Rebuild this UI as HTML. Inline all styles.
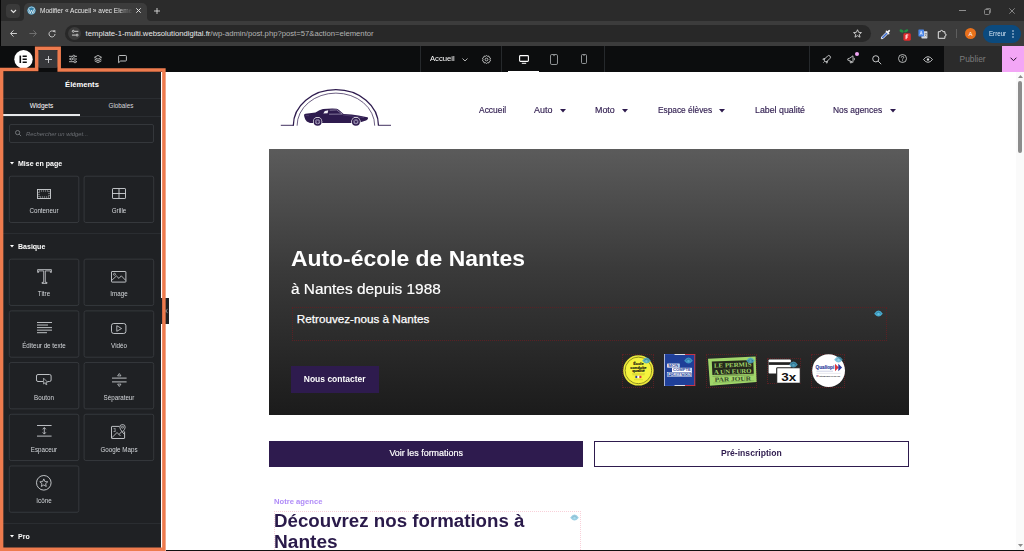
<!DOCTYPE html>
<html lang="fr">
<head>
<meta charset="utf-8">
<title>Modifier « Accueil » avec Elementor</title>
<style>
*{box-sizing:border-box;margin:0;padding:0}
html,body{width:1024px;height:551px;overflow:hidden;background:#fff}
body{position:relative;font-family:"Liberation Sans",sans-serif;color:#fff}
.a{position:absolute}
.t{position:absolute;white-space:nowrap;line-height:1}
svg{position:absolute;overflow:visible}
/* chrome */
#tabstrip{left:0;top:0;width:1024px;height:21px;background:#2b2b2b}
#tab{left:24px;top:3px;width:123px;height:18px;background:#3c3c3c;border-radius:5px 5px 0 0}
#tabsearch{left:6px;top:4px;width:14px;height:14px;background:#3a3a3a;border-radius:4px}
#addr{left:0;top:21px;width:1024px;height:25px;background:#3c3c3c}
#pill{left:65px;top:25px;width:806px;height:17px;border-radius:9px;background:#282828}
#siteinfo{left:68px;top:27px;width:13px;height:13px;border-radius:7px;background:#3c3c3c}
#erreur{left:982.500px;top:24.500px;width:38px;height:18px;border-radius:9px;background:#0b4a7e}
#avatar{left:965px;top:28px;width:11px;height:11px;border-radius:6px;background:#e8711c}
/* elementor top bar */
#ebar{left:0;top:46px;width:1024px;height:26px;background:#0c0d0e}
.vd{position:absolute;top:46px;width:1px;height:26px;background:#26292c}
#plusbg{left:38px;top:50px;width:20px;height:18px;background:#36373a;border-radius:2px}
#publier{left:944px;top:46px;width:58px;height:26px;background:#2b2b2b}
#pink{left:1002px;top:46px;width:22px;height:26px;background:#f3a6f6}
/* panel */
#panel{left:0;top:72px;width:161px;height:479px;background:#1f2124}
.hr{position:absolute;left:3px;width:158px;height:1px;background:#2a2d31}
.card{position:absolute;width:69.6px;height:46.4px;border:1px solid #34373b;border-radius:2px}
.lbl{position:absolute;white-space:nowrap;line-height:1;font-size:6.6px;color:#d5d8dc;text-align:center;width:70px;transform:scaleX(.945);margin-top:.1px}
.cat{position:absolute;white-space:nowrap;line-height:1;font-size:7.4px;font-weight:bold;color:#fff;left:17.6px;transform:scaleX(.95);transform-origin:0 50%}
/* preview */
#preview{left:162px;top:72px;width:853px;height:478px;background:#fff}
#sbar{left:1016px;top:72px;width:8px;height:478px;background:#fafafa}
#thumb{left:1018px;top:81px;width:4px;height:72px;border-radius:2px;background:#8c8c8c}
#hero{left:269.300px;top:148.800px;width:639.300px;height:265.800px;background:linear-gradient(180deg,#5b5b5b 0%,#3a3a3a 45%,#1b1b1b 100%)}
.nav{position:absolute;white-space:nowrap;line-height:1;font-size:8.7px;color:#2e1b4e;-webkit-text-stroke:.15px #2e1b4e;top:106px;transform-origin:0 50%}
.dot{position:absolute;border:1px dotted #5a2024}
</style>
</head>
<body>
<!-- ===== Browser chrome ===== -->
<div class="a" id="tabstrip"></div>
<div class="a" id="tabsearch"></div>
<div class="a" id="tab"></div>
<div class="a" id="addr"></div>
<svg style="left:20px;top:17px" width="131" height="4" viewBox="0 0 131 4"><path d="M0 4 Q4 4 4 0 V4 Z M131 4 Q127 4 127 0 V4 Z" fill="#3c3c3c"/></svg>
<div class="a" id="pill"></div>
<div class="a" id="siteinfo"></div>
<div class="a" id="avatar"></div>
<div class="a" id="erreur"></div>


<!-- chrome content -->
<svg style="left:9.5px;top:8.5px" width="7" height="5" viewBox="0 0 7 5"><path d="M1 1 L3.5 3.5 L6 1" fill="none" stroke="#e3e3e3" stroke-width="1.1"/></svg>
<svg style="left:27px;top:6px" width="9" height="9" viewBox="0 0 9 9"><circle cx="4.5" cy="4.5" r="4.3" fill="#2f7fa8"/><circle cx="4.5" cy="4.5" r="3.5" fill="none" stroke="#e8f1f5" stroke-width=".6"/><path d="M1.9 3.2 L3.3 7 L4.5 4 L5.7 7 L7.1 3.2" fill="none" stroke="#e8f1f5" stroke-width=".8"/></svg>
<div class="t" id="tabtitle" style="left:39.8px;top:7.9px;font-size:6.9px;color:#e8e8e8;width:98px;overflow:hidden;transform:scaleX(.945);transform-origin:0 50%;-webkit-mask-image:linear-gradient(90deg,#000 84%,transparent 100%)">Modifier « Accueil » avec Elementor</div>
<svg style="left:135.5px;top:8px" width="5" height="5" viewBox="0 0 5 5"><path d="M.3 .3 L4.7 4.7 M4.7 .3 L.3 4.7" stroke="#e3e3e3" stroke-width="1"/></svg>
<svg style="left:153.500px;top:7.500px" width="6" height="6" viewBox="0 0 6 6"><path d="M3 0 V6 M0 3 H6" stroke="#dcdcdc" stroke-width=".9"/></svg>
<!-- window controls -->
<svg style="left:959px;top:10px" width="7" height="1" viewBox="0 0 7 1"><path d="M0 .5 H7" stroke="#8f8f8f" stroke-width="1"/></svg>
<svg style="left:984px;top:7.5px" width="7" height="7" viewBox="0 0 7 7"><rect x=".5" y="1.5" width="5" height="5" rx="1" fill="none" stroke="#8f8f8f" stroke-width=".9"/><path d="M2 1.5 V.8 Q2 .5 2.5 .5 H6 Q6.5 .5 6.5 1 V4.5 Q6.5 5 5.6 5" fill="none" stroke="#8f8f8f" stroke-width=".8"/></svg>
<svg style="left:1008.5px;top:7.5px" width="6" height="6" viewBox="0 0 6 6"><path d="M.3 .3 L5.7 5.7 M5.7 .3 L.3 5.7" stroke="#8f8f8f" stroke-width=".9"/></svg>
<!-- nav buttons -->
<svg style="left:9.800px;top:30px" width="7" height="7" viewBox="0 0 7 7"><path d="M3.500 .4 L.5 3.500 L3.500 6.600 M.7 3.500 H6.900" fill="none" stroke="#cdcdcd" stroke-width="1"/></svg>
<svg style="left:28.5px;top:30px" width="8" height="7" viewBox="0 0 8 7"><path d="M4.4 .4 L7.4 3.5 L4.4 6.6 M7.2 3.5 H.4" fill="none" stroke="#6f6f6f" stroke-width="1"/></svg>
<svg style="left:47.5px;top:29.5px" width="8" height="8" viewBox="0 0 8 8"><path d="M7 4 A3 3 0 1 1 6 1.7" fill="none" stroke="#c9c9c9" stroke-width="1"/><path d="M4.8 .2 H7.4 V2.9 Z" fill="#c9c9c9"/></svg>
<!-- site info icon -->
<svg style="left:71.500px;top:30.300px" width="6.400" height="6.400" viewBox="0 0 6.400 6.400"><path d="M2.600 1.300 H6.400 M0 5.100 H3.800" stroke="#e3e3e3" stroke-width=".9"/><circle cx="1.300" cy="1.300" r="1" fill="none" stroke="#e3e3e3" stroke-width=".8"/><circle cx="5.100" cy="5.100" r="1" fill="none" stroke="#e3e3e3" stroke-width=".8"/></svg>
<div class="t" id="url" style="left:85.6px;top:29.6px;font-size:7.7px;color:#e8e8e8">template-1-multi.websolutiondigital.fr<span style="color:#b4b4b4">/wp-admin/post.php?post=57&amp;action=elementor</span></div>
<!-- star -->
<svg style="left:853px;top:29px" width="9" height="9" viewBox="0 0 10 10"><path d="M5 .8 L6.3 3.7 L9.4 4 L7 6 L7.8 9.1 L5 7.4 L2.2 9.1 L3 6 L.6 4 L3.7 3.7 Z" fill="none" stroke="#e3e3e3" stroke-width=".9" stroke-linejoin="round"/></svg>
<!-- eyedropper -->
<svg style="left:880px;top:28.500px" width="11" height="11" viewBox="0 0 11 11"><path d="M1.300 9.700 L1.600 8 L6.800 2.800 L8.300 4.300 L3.100 9.500 Z" fill="#3d6fd6" stroke="#f2f2f2" stroke-width=".9" stroke-linejoin="round"/><path d="M6.300 2.300 L8.800 4.800" stroke="#f2f2f2" stroke-width="1.300" stroke-linecap="round"/><path d="M7.600 3.400 L9 2" stroke="#f2f2f2" stroke-width="1.800" stroke-linecap="round"/><circle cx="9.600" cy="1.200" r=".5" fill="#f2f2f2"/></svg>
<!-- ext w/ red F -->
<svg style="left:899px;top:28px" width="13" height="14" viewBox="0 0 13 14"><ellipse cx="2.600" cy="3" rx="2.200" ry="1.400" fill="#1f9143" transform="rotate(28 2.600 3)"/><ellipse cx="7.200" cy="2.900" rx="2.200" ry="1.300" fill="#1f9143" transform="rotate(-28 7.200 2.900)"/><rect x="4.400" y="5.300" width="7.400" height="7.400" rx="1.400" fill="#e02b2b"/><path d="M7.100 11.200 V7 H9.300 M7.100 9 H8.900" stroke="#fff" stroke-width="1" fill="none"/></svg>
<!-- translate -->
<svg style="left:918px;top:28.5px" width="10" height="10" viewBox="0 0 10 10"><rect x="3.4" y="2.2" width="6" height="7.2" rx=".6" fill="#d7dbe0"/><rect x=".4" y=".4" width="5.6" height="7" rx=".6" fill="#4a86e8"/><path d="M2 5.8 L3.2 2.2 L4.4 5.8 M2.4 4.7 H4" stroke="#fff" stroke-width=".6" fill="none"/><path d="M6.6 4.5 H8.8 M7.7 4 V4.5 M8.4 4.5 Q7.9 6.6 6.6 7.4 M7 5.6 Q7.6 6.8 8.8 7.4" stroke="#5f6368" stroke-width=".5" fill="none"/></svg>
<!-- puzzle -->
<svg style="left:937px;top:28.500px" width="10" height="10" viewBox="0 0 10 10"><path d="M1.300 2.700 H3.300 A1.300 1.300 0 0 1 5.900 2.700 H7.900 V4.700 A1.200 1.200 0 0 1 7.900 7.100 V9.300 H1.300 Z" fill="none" stroke="#e3e3e3" stroke-width="1" stroke-linejoin="round"/></svg>
<div class="a" style="left:956px;top:29px;width:1px;height:9px;background:#5e5e5e"></div>
<div class="t" style="left:965px;top:30.6px;width:11px;text-align:center;font-size:6px;color:#fff">A</div>
<div class="t" id="err" style="left:988.8px;top:31.2px;font-size:6.5px;color:#d6e6f5;transform:scaleX(.95);transform-origin:0 50%">Erreur</div>
<svg style="left:1012px;top:30px" width="2" height="8" viewBox="0 0 2 8"><circle cx="1" cy="1" r=".8" fill="#d6e6f5"/><circle cx="1" cy="4" r=".8" fill="#d6e6f5"/><circle cx="1" cy="7" r=".8" fill="#d6e6f5"/></svg>

<div class="a" style="left:0;top:0;width:1px;height:68px;background:#050505"></div>
<!-- ===== Elementor top bar ===== -->
<div class="a" id="ebar"></div>
<div class="a" id="plusbg"></div>
<div class="a" id="publier"></div>
<div class="a" id="pink"></div>


<!-- elementor bar content -->
<div class="vd" style="left:420px"></div><div class="vd" style="left:501px"></div><div class="vd" style="left:604px"></div><div class="vd" style="left:809px"></div>
<!-- logo -->
<svg style="left:14px;top:50px" width="19" height="19" viewBox="0 0 19 19"><circle cx="9.5" cy="9.3" r="9.2" fill="#fff"/><path d="M6.3 5.6 V13" stroke="#0c0d0e" stroke-width="1.6"/><path d="M8.6 6.3 H12.8 M8.6 9.3 H12.8 M8.6 12.3 H12.8" stroke="#0c0d0e" stroke-width="1.5"/></svg>
<svg style="left:45px;top:56px" width="7" height="7" viewBox="0 0 7 7"><path d="M3.500 0 V7 M0 3.500 H7" stroke="#d4d5d7" stroke-width=".9"/></svg>
<!-- sliders -->
<svg style="left:69px;top:55px" width="8" height="8" viewBox="0 0 8 8"><path d="M0 1.3 H8 M0 4 H8 M0 6.7 H8" stroke="#d9dadb" stroke-width=".8"/><circle cx="4.8" cy="1.3" r="1.1" fill="#0c0d0e" stroke="#d9dadb" stroke-width=".7"/><circle cx="2.4" cy="4" r="1.1" fill="#0c0d0e" stroke="#d9dadb" stroke-width=".7"/><circle cx="6" cy="6.7" r="1.1" fill="#0c0d0e" stroke="#d9dadb" stroke-width=".7"/></svg>
<!-- layers -->
<svg style="left:93.5px;top:55px" width="8" height="8" viewBox="0 0 8 8"><path d="M4 .4 L7.5 2.3 L4 4.2 L.5 2.3 Z M.6 4.1 L4 5.9 L7.4 4.1 M.6 5.8 L4 7.6 L7.4 5.8" fill="none" stroke="#d9dadb" stroke-width=".8" stroke-linejoin="round"/></svg>
<!-- chat -->
<svg style="left:117.8px;top:55.2px" width="9" height="8" viewBox="0 0 9 8"><path d="M1.400 .5 H7.600 Q8.400 .5 8.400 1.300 V5.200 Q8.400 6 7.600 6 H2.600 L.6 7.700 V1.300 Q.6 .5 1.400 .5 Z" fill="none" stroke="#d9dadb" stroke-width=".85" stroke-linejoin="round"/></svg>
<!-- center -->
<div class="t" id="acc" style="left:430px;top:55.1px;font-size:7.6px;color:#fff;transform:scaleX(1.01);transform-origin:0 50%">Accueil</div>
<svg style="left:461.5px;top:57.5px" width="6" height="4" viewBox="0 0 6 4"><path d="M.5 .5 L3 3 L5.500 .5" fill="none" stroke="#d9dadb" stroke-width=".8"/></svg>
<svg style="left:482px;top:54.5px" width="9" height="9" viewBox="0 0 9 9"><circle cx="4.500" cy="4.500" r="1.400" fill="none" stroke="#d9dadb" stroke-width=".8"/><path d="M4.500 .5 L5.600 1.300 L6.900 1.100 L7.300 2.400 L8.500 3.100 L8 4.500 L8.500 5.900 L7.300 6.600 L6.900 7.900 L5.600 7.700 L4.500 8.500 L3.400 7.700 L2.100 7.900 L1.700 6.600 L.5 5.900 L1 4.500 L.5 3.100 L1.700 2.400 L2.100 1.100 L3.400 1.300 Z" fill="none" stroke="#d9dadb" stroke-width=".8" stroke-linejoin="round"/></svg>
<!-- devices -->
<svg style="left:518.5px;top:54.5px" width="10" height="9" viewBox="0 0 10 9"><rect x=".6" y=".6" width="8.800" height="5.800" rx=".8" fill="none" stroke="#fff" stroke-width="1.100"/><path d="M2.800 8.300 H7.200" stroke="#fff" stroke-width="1"/></svg>
<svg style="left:549.5px;top:53.5px" width="8" height="11" viewBox="0 0 8 11"><rect x=".5" y=".5" width="7" height="10" rx="1.300" fill="none" stroke="#a9abad" stroke-width=".85"/><path d="M3 1.600 H5" stroke="#a9abad" stroke-width=".6"/></svg>
<svg style="left:580.5px;top:54px" width="6" height="10" viewBox="0 0 6 10"><rect x=".5" y=".5" width="5" height="9" rx="1.100" fill="none" stroke="#a9abad" stroke-width=".85"/><path d="M2.300 1.500 H3.700" stroke="#a9abad" stroke-width=".6"/></svg>
<div class="a" style="left:508px;top:70.500px;width:31px;height:1.500px;background:#fff"></div>
<!-- right icons -->
<svg style="left:821.500px;top:54.500px" width="9" height="9" viewBox="0 0 9 9"><g transform="rotate(45 4.500 4.500)" fill="none" stroke="#d9dadb" stroke-width=".8" stroke-linejoin="round"><rect x="2.800" y="-.4" width="3.400" height="7.400" rx="1.700"/><path d="M2.800 4.800 L1.500 6.800 H2.800 M6.200 4.800 L7.500 6.800 H6.200 M4.500 7.200 V8.900"/></g></svg>
<svg style="left:847px;top:55px" width="10" height="9" viewBox="0 0 10 9"><path d="M.8 3.800 L2.600 3.200 L6 .8 V7.400 L2.600 5.600 L.8 5.200 Z M2.800 5.700 L3.500 8 L4.700 7.700 L4.200 6.300 M7 2.800 Q8 4 7 5.400" fill="none" stroke="#d9dadb" stroke-width=".8" stroke-linejoin="round"/></svg>
<div class="a" style="left:855px;top:51.700px;width:4px;height:4px;border-radius:2px;background:#f0a4f3"></div>
<svg style="left:872px;top:54.5px" width="10" height="10" viewBox="0 0 10 10"><circle cx="3.800" cy="3.800" r="3.100" fill="none" stroke="#d9dadb" stroke-width=".9"/><path d="M6.100 6.100 L9.200 9.200" stroke="#d9dadb" stroke-width=".9"/></svg>
<svg style="left:898px;top:54.3px" width="9" height="9" viewBox="0 0 9 9"><circle cx="4.500" cy="4.500" r="4" fill="none" stroke="#d9dadb" stroke-width=".8"/><path d="M3.300 3.600 Q3.300 2.400 4.500 2.400 Q5.700 2.400 5.700 3.500 Q5.700 4.200 4.500 4.900 V5.500" fill="none" stroke="#d9dadb" stroke-width=".8"/><circle cx="4.500" cy="6.700" r=".5" fill="#d9dadb"/></svg>
<svg style="left:923px;top:55.5px" width="10" height="7" viewBox="0 0 10 7"><path d="M.5 3.500 Q5 -2.200 9.500 3.500 Q5 9.200 .5 3.500 Z" fill="none" stroke="#d9dadb" stroke-width=".85"/><circle cx="5" cy="3.500" r="1.200" fill="#d9dadb"/></svg>
<div class="t" id="pub" style="left:959.600px;top:54.700px;font-size:8.4px;color:#7c7c7c">Publier</div>
<svg style="left:1009.5px;top:57px" width="7" height="5" viewBox="0 0 7 5"><path d="M.6 .7 L3.500 3.700 L6.400 .7" fill="none" stroke="#2a1030" stroke-width="1"/></svg>

<!-- ===== Preview ===== -->
<div class="a" id="preview"></div>
<div class="a" id="sbar"></div>
<div class="a" id="thumb"></div>
<div class="a" id="hero"></div>


<!-- preview content -->
<!-- logo -->
<svg style="left:280px;top:86px" width="112" height="42" viewBox="0 0 112 42">
<path d="M.8 39.300 H13.500 M99 39.300 H111" stroke="#2e1b4e" stroke-width=".9" fill="none"/>
<path d="M13.300 39.700 A42.600 36 0 0 1 98.500 39.700" fill="none" stroke="#2e1b4e" stroke-width="1.300"/>
<path d="M17.100 39.700 A38.800 32.600 0 0 1 94.700 39.700" fill="none" stroke="#2e1b4e" stroke-width=".7"/>
<!-- car -->
<path d="M24 28.900 Q24 28 25.500 27.800 L35.500 26.400 Q39.500 24 43 23.100 Q50 22.300 56.800 22.700 Q58.500 23.300 63.600 27.900 Q72 28.300 78.500 29.400 Q84 30.200 87.400 31.300 Q88.400 31.800 88 32.500 Q87.500 33.800 86 34.500 L80.500 36.300 L78 36.900 H30 Q26 35.400 25.300 33.400 Q24.200 31 24 28.900 Z" fill="#2e1b4e"/>
<path d="M44.800 25 L48.300 24.200 L47.600 27.300 L43.300 27.400 Z" fill="#f4f2f8"/><path d="M49.600 24.200 L56.600 23.900 L62.300 28.100 L49 28.200" fill="none" stroke="#c9c2d8" stroke-width=".55"/><path d="M25.500 29.500 L29 29.700 M63 29 L84 31.600" stroke="#6f6190" stroke-width=".4" fill="none"/>
<circle cx="37.600" cy="35.800" r="4.700" fill="#fff"/><circle cx="37.600" cy="35.800" r="4" fill="#2e1b4e"/><circle cx="37.600" cy="35.800" r="2.500" fill="#b9b0cc"/><path d="M37.600 33.300 V38.300 M35.100 35.800 H40.100 M35.800 34 L39.400 37.600 M39.400 34 L35.800 37.600" stroke="#2e1b4e" stroke-width=".6"/><circle cx="37.600" cy="35.800" r=".8" fill="#2e1b4e"/><circle cx="75.900" cy="35.800" r="4.700" fill="#fff"/><circle cx="75.900" cy="35.800" r="4" fill="#2e1b4e"/><circle cx="75.900" cy="35.800" r="2.500" fill="#b9b0cc"/><path d="M75.900 33.300 V38.300 M73.400 35.800 H78.400 M74.100 34 L77.700 37.600 M77.700 34 L74.100 37.600" stroke="#2e1b4e" stroke-width=".6"/><circle cx="75.900" cy="35.800" r=".8" fill="#2e1b4e"/>
</svg>
<!-- nav -->
<div class="nav" id="n1" style="left:479px;transform:scaleX(0.971)">Accueil</div>
<div class="nav" id="n2" style="left:534px;transform:scaleX(1.029)">Auto</div><svg style="left:559.8px;top:109.2px" width="6" height="3.4" viewBox="0 0 6 3.4"><path d="M0 0 H6 L3 3.400 Z" fill="#2e1b4e"/></svg>
<div class="nav" id="n3" style="left:595px;transform:scaleX(1.024)">Moto</div><svg style="left:622px;top:109.2px" width="6" height="3.4" viewBox="0 0 6 3.4"><path d="M0 0 H6 L3 3.400 Z" fill="#2e1b4e"/></svg>
<div class="nav" id="n4" style="left:657.6px;transform:scaleX(0.957)">Espace élèves</div><svg style="left:719.4px;top:109.2px" width="6" height="3.4" viewBox="0 0 6 3.4"><path d="M0 0 H6 L3 3.400 Z" fill="#2e1b4e"/></svg>
<div class="nav" id="n5" style="left:754.9px;transform:scaleX(1.015)">Label qualité</div>
<div class="nav" id="n6" style="left:833.3px;transform:scaleX(0.968)">Nos agences</div><svg style="left:890.3px;top:109.2px" width="6" height="3.4" viewBox="0 0 6 3.4"><path d="M0 0 H6 L3 3.400 Z" fill="#2e1b4e"/></svg>
<!-- hero text -->
<div class="t" id="h1" style="left:290.6px;top:247.5px;font-size:22px;font-weight:bold;color:#fff;transform:scaleX(1.04);transform-origin:0 50%">Auto-école de Nantes</div>
<div class="t" id="h2" style="left:291px;top:280.7px;font-size:15.500px;color:#fff;transform:scaleX(.993);transform-origin:0 50%;-webkit-text-stroke:.2px #fff">à Nantes depuis 1988</div>
<div class="dot" style="left:291.5px;top:307px;width:595px;height:33.500px"></div>
<div class="t" id="h3" style="left:296.8px;top:312.9px;font-size:11.700px;color:#fff;-webkit-text-stroke:.25px #fff">Retrouvez-nous à Nantes</div>
<div class="a" style="left:291.4px;top:366px;width:87.400px;height:26.700px;background:#2e1b4e"></div>
<div class="t" id="b1" style="left:291.4px;width:87.400px;text-align:center;top:375px;font-size:9px;font-weight:bold;color:#fff;transform:scaleX(.943)">Nous contacter</div>

<!-- badges -->
<div class="dot" style="left:621.800px;top:353.700px;width:32px;height:34px"></div>
<svg style="left:622.500px;top:354.500px" width="31" height="31" viewBox="0 0 31 31"><circle cx="15.400" cy="15.400" r="15.200" fill="#ece93a"/><circle cx="15.400" cy="15.400" r="13.300" fill="none" stroke="#8f8d22" stroke-width="1"/><circle cx="15.400" cy="15.400" r="12.500" fill="#f5f33e"/>
<text x="15.400" y="10.300" font-family="Liberation Sans" font-weight="bold" font-size="3.900" text-anchor="middle" fill="#111" stroke="#111" stroke-width=".15">École</text>
<text x="15.400" y="13.600" font-family="Liberation Sans" font-weight="bold" font-size="3.900" text-anchor="middle" fill="#111" stroke="#111" stroke-width=".15">conduite</text>
<text x="15.400" y="16.900" font-family="Liberation Sans" font-weight="bold" font-size="3.900" text-anchor="middle" fill="#111" stroke="#111" stroke-width=".15">qualité</text>
<path d="M9 18.700 H22 M9.500 19.800 H21.500" stroke="#b9b72c" stroke-width=".4"/>
<rect x="12.400" y="20.800" width="2" height="2.300" fill="#2d3f9e"/><rect x="14.400" y="20.800" width="2" height="2.300" fill="#fff"/><rect x="16.400" y="20.800" width="2" height="2.300" fill="#e0363c"/>
<path d="M11 24.700 H20" stroke="#b9b72c" stroke-width=".4"/></svg>
<svg style="left:641.5px;top:357.0px;opacity:0.85" width="9" height="6.6" viewBox="0 0 9 6.6"><path d="M.2 3.700 Q4.500 -2.600 8.800 3.700 Q4.500 9.200 .2 3.700 Z" fill="#48a9cd"/><path d="M2.100 3.500 Q4.500 .8 6.900 3.500" fill="none" stroke="#2d7d9f" stroke-width=".8"/><circle cx="4.500" cy="4.100" r="1.100" fill="#66c2e2"/></svg>
<!-- mon compte formation -->
<svg style="left:664.200px;top:354.100px" width="31.200" height="32" viewBox="0 0 31.200 32"><rect x="0" y="0" width="31.200" height="32" fill="#1f3f98"/>
<rect x="0" y="0" width="10.500" height=".9" fill="#2f4fb0"/><rect x="10.500" y="0" width="10.500" height=".9" fill="#f2f2f2"/><rect x="21" y="0" width="10.200" height=".9" fill="#d8373f"/>
<rect x="30.300" y="0" width=".9" height="32" fill="#d8373f"/>
<rect x="0" y="31.100" width="10.500" height=".9" fill="#2f4fb0"/><rect x="10.500" y="31.100" width="10.500" height=".9" fill="#f2f2f2"/><rect x="21" y="31.100" width="10.200" height=".9" fill="#d8373f"/>
<rect x="0" y="0" width=".7" height="32" fill="#e9e9ee"/>
<rect x="3.200" y="9.600" width="12.400" height="4" fill="#fff"/><text x="4.200" y="12.900" font-family="Liberation Sans" font-weight="bold" font-size="3.500" fill="#1f3f98" textLength="10.400" lengthAdjust="spacingAndGlyphs">MON</text>
<rect x="8" y="13.800" width="19.800" height="4.200" fill="#fff"/><text x="9" y="17.200" font-family="Liberation Sans" font-weight="bold" font-size="3.500" fill="#1f3f98" textLength="17.800" lengthAdjust="spacingAndGlyphs">COMPTE</text>
<rect x="3.200" y="18.400" width="24.600" height="4.200" fill="none" stroke="#fff" stroke-width=".5"/><text x="4.200" y="21.700" font-family="Liberation Sans" font-weight="bold" font-size="3.400" fill="#fff" textLength="22.600" lengthAdjust="spacingAndGlyphs">FORMATION</text>
</svg>
<svg style="left:683.7px;top:357.0px;opacity:0.8" width="9" height="6.6" viewBox="0 0 9 6.6"><path d="M.2 3.700 Q4.500 -2.600 8.800 3.700 Q4.500 9.200 .2 3.700 Z" fill="#48a9cd"/><path d="M2.100 3.500 Q4.500 .8 6.900 3.500" fill="none" stroke="#2d7d9f" stroke-width=".8"/><circle cx="4.500" cy="4.100" r="1.100" fill="#66c2e2"/></svg>
<!-- permis a un euro -->
<div class="dot" style="left:705.900px;top:353.700px;width:50.800px;height:34px"></div>
<svg style="left:706.500px;top:355.500px" width="50" height="31" viewBox="0 0 50 31"><path d="M1 2.800 L48.600 .6 L49.600 26 L3 29.800 Z" fill="#a1d66a"/>
<path d="M4.800 5.600 L46.200 4 L46.800 17.800 L5.400 19 Z" fill="#26281c"/>
<text x="7" y="11.100" font-family="Liberation Serif" font-weight="bold" font-size="6.200" fill="#a1d66a" textLength="37.500" lengthAdjust="spacingAndGlyphs" transform="rotate(-2 25 10)">LE PERMIS</text>
<text x="7" y="17.600" font-family="Liberation Serif" font-weight="bold" font-size="6.200" fill="#a1d66a" textLength="37.500" lengthAdjust="spacingAndGlyphs" transform="rotate(-2 25 16)">A UN EURO</text>
<text x="7.600" y="25.200" font-family="Liberation Serif" font-weight="bold" font-size="6.200" fill="#3a4a2a" textLength="36.500" lengthAdjust="spacingAndGlyphs" transform="rotate(-2 25 23)">PAR JOUR</text>
<path d="M5.500 20.300 L46.800 18.900" stroke="#4a5a30" stroke-width=".4"/><path d="M6 27 L46.800 24.600" stroke="#6f9a48" stroke-width=".4"/></svg>
<svg style="left:745.5px;top:357.0px;opacity:0.8" width="9" height="6.6" viewBox="0 0 9 6.6"><path d="M.2 3.700 Q4.500 -2.600 8.800 3.700 Q4.500 9.200 .2 3.700 Z" fill="#48a9cd"/><path d="M2.100 3.500 Q4.500 .8 6.900 3.500" fill="none" stroke="#2d7d9f" stroke-width=".8"/><circle cx="4.500" cy="4.100" r="1.100" fill="#66c2e2"/></svg>
<!-- 3x cards -->
<div class="dot" style="left:767px;top:358px;width:34px;height:25.500px"></div>
<svg style="left:767.500px;top:358.500px" width="33" height="25" viewBox="0 0 33 25"><rect x=".6" y=".4" width="22.200" height="14.200" rx=".8" fill="#fff"/><rect x=".6" y="3.200" width="22.200" height="2.700" fill="#222"/>
<rect x="8.700" y="8.800" width="23.600" height="15.600" rx=".8" fill="#fff" stroke="#222" stroke-width="1.100"/>
<text x="20.700" y="21.800" font-family="Liberation Sans" font-weight="bold" font-size="11.500" text-anchor="middle" fill="#111" textLength="15" lengthAdjust="spacingAndGlyphs">3x</text></svg>
<svg style="left:789.0px;top:361.0px;opacity:0.8" width="9" height="6.6" viewBox="0 0 9 6.6"><path d="M.2 3.700 Q4.500 -2.600 8.800 3.700 Q4.500 9.200 .2 3.700 Z" fill="#48a9cd"/><path d="M2.100 3.500 Q4.500 .8 6.900 3.500" fill="none" stroke="#2d7d9f" stroke-width=".8"/><circle cx="4.500" cy="4.100" r="1.100" fill="#66c2e2"/></svg>
<!-- qualiopi -->
<div class="dot" style="left:811.300px;top:353.700px;width:34px;height:34px"></div>
<svg style="left:811.800px;top:354.200px" width="33" height="33" viewBox="0 0 33 33"><circle cx="16.600" cy="16.600" r="16.400" fill="#fff"/>
<text x="3.600" y="15.200" font-family="Liberation Sans" font-weight="bold" font-size="5.800" fill="#2a3a9a" stroke="#2a3a9a" stroke-width=".15" textLength="18.600" lengthAdjust="spacingAndGlyphs">Qualiopi</text>
<path d="M23 9.800 L26.800 13.500 L23 17.200 Z" fill="#e0363c"/><path d="M26.300 9.800 L30.100 13.500 L26.300 17.200 Z" fill="#2a3a9a"/>
<path d="M4.500 17.200 H21" stroke="#9aa0c8" stroke-width=".5"/><path d="M4.500 19.400 H28.500" stroke="#c8c8d4" stroke-width=".4"/>
<rect x="4.500" y="21.300" width="1" height="1.300" fill="#2a3a9a"/><rect x="5.500" y="21.300" width="1" height="1.300" fill="#e0363c"/>
<text x="7.200" y="22.600" font-family="Liberation Sans" font-weight="bold" font-size="2.300" fill="#222" textLength="21" lengthAdjust="spacingAndGlyphs">RÉPUBLIQUE FRANÇAISE</text></svg>
<svg style="left:833.5px;top:356.3px;opacity:0.7" width="9" height="6.6" viewBox="0 0 9 6.6"><path d="M.2 3.700 Q4.500 -2.600 8.800 3.700 Q4.500 9.200 .2 3.700 Z" fill="#48a9cd"/><path d="M2.100 3.500 Q4.500 .8 6.900 3.500" fill="none" stroke="#2d7d9f" stroke-width=".8"/><circle cx="4.500" cy="4.100" r="1.100" fill="#66c2e2"/></svg>
<!-- eye of text box / section -->
<svg style="left:873.8px;top:310.0px;opacity:1" width="9" height="6.6" viewBox="0 0 9 6.6"><path d="M.2 3.700 Q4.500 -2.600 8.800 3.700 Q4.500 9.200 .2 3.700 Z" fill="#48a9cd"/><path d="M2.100 3.500 Q4.500 .8 6.900 3.500" fill="none" stroke="#2d7d9f" stroke-width=".8"/><circle cx="4.500" cy="4.100" r="1.100" fill="#66c2e2"/></svg>
<svg style="left:569.5px;top:513.8px;opacity:0.55" width="9" height="6.6" viewBox="0 0 9 6.6"><path d="M.2 3.700 Q4.500 -2.600 8.800 3.700 Q4.500 9.200 .2 3.700 Z" fill="#48a9cd"/><path d="M2.100 3.500 Q4.500 .8 6.900 3.500" fill="none" stroke="#2d7d9f" stroke-width=".8"/><circle cx="4.500" cy="4.100" r="1.100" fill="#66c2e2"/></svg>

<!-- buttons -->
<div class="a" style="left:269.100px;top:441px;width:314.300px;height:26px;background:#2e1b4e"></div>
<div class="t" id="b2" style="left:269.100px;width:314.300px;text-align:center;top:448.8px;font-size:9.3px;color:#fff;transform:scaleX(.961);-webkit-text-stroke:.2px #fff">Voir les formations</div>
<div class="a" style="left:594.100px;top:441px;width:314.700px;height:26px;background:#fff;border:1.800px solid #2e1b4e"></div>
<div class="t" id="b3" style="left:594.100px;width:314.700px;text-align:center;top:448.7px;font-size:8.7px;font-weight:bold;color:#2e1b4e;transform:scaleX(.99)">Pré-inscription</div>
<!-- section -->
<div class="t" id="na" style="left:274.2px;top:497.5px;font-size:7.8px;font-weight:bold;color:#b08cf8;transform:scaleX(.98);transform-origin:0 50%">Notre agence</div>
<div class="a" style="left:274px;top:510.600px;width:306.500px;height:45px;border:1px dotted #f9d0d9"></div>
<div class="t" id="d1" style="left:274.3px;top:512.2px;font-size:18.900px;font-weight:bold;color:#2a1a4a;transform:scaleX(.99);transform-origin:0 50%">Découvrez nos formations à</div>
<div class="t" id="d2" style="left:274.3px;top:533.2px;font-size:18.900px;font-weight:bold;color:#2a1a4a;transform:scaleX(1.01);transform-origin:0 50%">Nantes</div>
<!-- bottom line + scroll arrows -->
<div class="a" style="left:166px;top:549.500px;width:858px;height:2px;background:#111"></div>
<svg style="left:1017.500px;top:75px" width="5" height="3" viewBox="0 0 5 3"><path d="M0 3 H5 L2.500 0 Z" fill="#8c8c8c"/></svg>
<svg style="left:1017.500px;top:543.500px" width="5" height="3" viewBox="0 0 5 3"><path d="M0 0 H5 L2.500 3 Z" fill="#8c8c8c"/></svg>

<!-- ===== Panel ===== -->
<div class="a" id="panel"></div>


<!-- panel content -->
<svg style="left:0;top:0" width="161" height="551" viewBox="0 0 161 551"><g fill="none" stroke="#35383c" stroke-width="1"><rect x="9.300" y="176.20" width="69.500" height="46.300" rx="1.800"/><rect x="84.100" y="176.20" width="69.600" height="46.300" rx="1.800"/><rect x="9.300" y="259.15" width="69.500" height="46.300" rx="1.800"/><rect x="84.100" y="259.15" width="69.600" height="46.300" rx="1.800"/><rect x="9.300" y="310.90" width="69.500" height="46.300" rx="1.800"/><rect x="84.100" y="310.90" width="69.600" height="46.300" rx="1.800"/><rect x="9.300" y="362.55" width="69.500" height="46.300" rx="1.800"/><rect x="84.100" y="362.55" width="69.600" height="46.300" rx="1.800"/><rect x="9.300" y="414.25" width="69.500" height="46.300" rx="1.800"/><rect x="84.100" y="414.25" width="69.600" height="46.300" rx="1.800"/><rect x="9.300" y="465.95" width="69.500" height="46.300" rx="1.800"/></g></svg>

<div class="t" id="elts" style="left:3px;width:158px;text-align:center;top:80.9px;font-size:7.6px;font-weight:bold;color:#fff">Éléments</div>
<div class="hr" style="top:97.5px"></div>
<div class="t" id="tabw" style="left:3px;width:77px;text-align:center;top:102.6px;font-size:6.5px;color:#fff">Widgets</div>
<div class="t" id="tabg" style="left:82px;width:78px;text-align:center;top:102.6px;font-size:6.3px;color:#d5d8dc">Globales</div>
<div class="hr" style="top:115.8px"></div>
<div class="a" style="left:3px;top:114.400px;width:77px;height:2px;background:#e6e8ea"></div>
<div class="a" style="left:9.3px;top:124.4px;width:144.3px;height:18.2px;border:1px solid #34373b;border-radius:2px"></div>
<svg style="left:15.200px;top:130.300px" width="6.500" height="6.500" viewBox="0 0 6.500 6.500"><circle cx="2.600" cy="2.600" r="2.100" fill="none" stroke="#8a8d91" stroke-width=".75"/><path d="M4.200 4.200 L6.100 6.100" stroke="#8a8d91" stroke-width=".75"/></svg>
<div class="t" id="ph" style="left:25.500px;top:130.5px;font-size:6.2px;font-style:italic;color:#6c6f74;transform:scaleX(.95);transform-origin:0 50%">Rechercher un widget...</div>
<svg style="left:9.8px;top:162.2px" width="4" height="3" viewBox="0 0 4 3"><path d="M0 0 H4 L2 2.600 Z" fill="#fff"/></svg><div class="cat" style="top:160.1px">Mise en page</div>
<svg style="left:37.20px;top:188.60px" width="14" height="10" viewBox="0 0 14 10"><rect x=".5" y=".5" width="13" height="9" fill="none" stroke="#cfd2d6" stroke-width=".9"/><rect x="2" y="2" width="10" height="6" fill="none" stroke="#cfd2d6" stroke-width=".8" stroke-dasharray="1.100 .9"/></svg><div class="lbl" style="left:9.3px;top:208.4px">Conteneur</div>
<svg style="left:112px;top:188px" width="14" height="11" viewBox="0 0 14 11"><rect x=".5" y=".5" width="13" height="10" rx=".6" fill="none" stroke="#cfd2d6" stroke-width=".9"/><path d="M7 .5 V10.500 M.5 5.500 H13.500" stroke="#cfd2d6" stroke-width=".9"/></svg><div class="lbl" style="left:84px;top:208.4px">Grille</div>
<div class="hr" style="top:233.2px"></div>
<svg style="left:9.8px;top:245.0px" width="4" height="3" viewBox="0 0 4 3"><path d="M0 0 H4 L2 2.600 Z" fill="#fff"/></svg><div class="cat" style="top:242.9px">Basique</div>
<svg style="left:36.70px;top:269.10px" width="15" height="15" viewBox="0 0 15 15"><path d="M.6 .6 H14.400 V3.400 H13.400 V1.900 H8.300 V13.400 H10 V14.400 H5 V13.400 H6.700 V1.900 H1.600 V3.400 H.6 Z" fill="none" stroke="#cfd2d6" stroke-width=".8" stroke-linejoin="round"/></svg><div class="lbl" style="left:9.3px;top:291.4px">Titre</div>
<svg style="left:111.10px;top:270.80px" width="15.4" height="11.6" viewBox="0 0 15.4 11.6"><rect x=".5" y=".5" width="14.400" height="10.600" rx=".5" fill="none" stroke="#cfd2d6" stroke-width=".9"/><circle cx="3.500" cy="3.300" r="1" fill="none" stroke="#cfd2d6" stroke-width=".7"/><path d="M.8 9.300 L5.400 5 L8 7.400 L10.300 4.800 L14.600 9.300" fill="none" stroke="#cfd2d6" stroke-width=".8" stroke-linejoin="round"/></svg><div class="lbl" style="left:84px;top:291.4px">Image</div>
<svg style="left:36.70px;top:321.80px" width="15" height="11.2" viewBox="0 0 15 11.2"><path d="M0 .5 H15 M0 3.050 H11 M0 5.600 H15 M0 8.150 H15 M0 10.700 H10" stroke="#cfd2d6" stroke-width=".9"/></svg><div class="lbl" style="left:9.3px;top:343.2px">Éditeur de texte</div>
<svg style="left:111.10px;top:322.70px" width="15.4" height="11" viewBox="0 0 15.4 11"><rect x=".5" y=".5" width="14.400" height="10" rx="2.200" fill="none" stroke="#cfd2d6" stroke-width=".9"/><path d="M5.800 2.700 L10.600 5.500 L5.800 8.300 Z" fill="none" stroke="#cfd2d6" stroke-width=".8" stroke-linejoin="round"/></svg><div class="lbl" style="left:84px;top:343.2px">Vidéo</div>
<svg style="left:36.40px;top:373.70px" width="15.6" height="11" viewBox="0 0 15.6 11"><path d="M7 7.500 H2 Q.5 7.500 .5 6 V2 Q.5 .5 2 .5 H13.600 Q15.100 .5 15.100 2 V6 Q15.100 7.500 13.600 7.500 H11.500" fill="none" stroke="#cfd2d6" stroke-width=".9"/><path d="M7.600 4.200 V10 L9 8.700 L10 10.800 L10.900 10.400 L9.900 8.400 L11.600 8.200 Z" fill="#1f2124" stroke="#cfd2d6" stroke-width=".7" stroke-linejoin="round"/></svg><div class="lbl" style="left:9.3px;top:394.8px">Bouton</div>
<svg style="left:111.50px;top:372.60px" width="14.6" height="14" viewBox="0 0 14.6 14"><path d="M0 5.100 H14.600 M0 8.900 H14.600" stroke="#cfd2d6" stroke-width=".9"/><path d="M7.300 .5 L9 2.900 H5.600 Z M7.300 13.500 L9 11.100 H5.600 Z" fill="none" stroke="#cfd2d6" stroke-width=".7" stroke-linejoin="round"/></svg><div class="lbl" style="left:84px;top:394.8px">Séparateur</div>
<svg style="left:36.90px;top:425.20px" width="14.6" height="11.6" viewBox="0 0 14.6 11.6"><path d="M0 .5 H14.600 M0 11.100 H14.600" stroke="#cfd2d6" stroke-width=".9"/><path d="M7.300 2.800 V8.800 M5.700 4.300 L7.300 2.500 L8.900 4.300 M5.700 7.300 L7.300 9.100 L8.900 7.300" fill="none" stroke="#cfd2d6" stroke-width=".8" stroke-linejoin="round"/></svg><div class="lbl" style="left:9.3px;top:446.5px">Espaceur</div>
<svg style="left:111.30px;top:423.80px" width="15" height="15" viewBox="0 0 15 15"><path d="M8.500 2.400 H1.100 Q.5 2.400 .5 3 V14 Q.5 14.500 1.100 14.500 H13 Q13.600 14.500 13.600 14 V7.500" fill="none" stroke="#cfd2d6" stroke-width=".9"/><path d="M.8 13.800 L6 8.500 L9.500 12 M8 10.500 L10.800 7.500 L13.400 10.400" fill="none" stroke="#cfd2d6" stroke-width=".8" stroke-linejoin="round"/><path d="M11.500 8.200 Q8.800 5 8.800 3.200 Q8.800 .5 11.500 .5 Q14.200 .5 14.200 3.200 Q14.200 5 11.500 8.200 Z" fill="#1f2124" stroke="#cfd2d6" stroke-width=".8"/><circle cx="11.500" cy="3.200" r="1" fill="none" stroke="#cfd2d6" stroke-width=".7"/><path d="M2.500 4.600 H4.300 Q4.800 5.500 3.600 6 Q4.900 6.400 4.300 7.500 H2.500" fill="none" stroke="#cfd2d6" stroke-width=".6"/></svg><div class="lbl" style="left:84px;top:446.5px">Google Maps</div>
<svg style="left:36.40px;top:475.30px" width="15.6" height="15.6" viewBox="0 0 15.6 15.6"><circle cx="7.800" cy="7.800" r="7.300" fill="none" stroke="#cfd2d6" stroke-width=".9"/><polygon points="7.80,3.90 8.92,6.56 11.79,6.80 9.61,8.69 10.27,11.50 7.80,10.00 5.33,11.50 5.99,8.69 3.81,6.80 6.68,6.56" fill="none" stroke="#cfd2d6" stroke-width=".8" stroke-linejoin="round"/></svg><div class="lbl" style="left:9.3px;top:498.1px">Icône</div>
<div class="hr" style="top:523px"></div>
<svg style="left:9.8px;top:534.8px" width="4" height="3" viewBox="0 0 4 3"><path d="M0 0 H4 L2 2.600 Z" fill="#fff"/></svg><div class="cat" style="top:532.7px">Pro</div>
<div class="a" style="left:161px;top:297.5px;width:8px;height:26px;background:#1f2124"></div><svg style="left:164.8px;top:308.5px" width="3" height="4" viewBox="0 0 3 4"><path d="M2.500 .3 L.5 2 L2.500 3.700" fill="none" stroke="#d5d8dc" stroke-width=".7"/></svg>

<!-- orange highlight outline -->
<svg id="outline" width="1024" height="551" style="left:0;top:0" viewBox="0 0 1024 551">
<path d="M1.6 552 V69.400 H36.650 V48.250 H59.200 V69.900 H163.900 V549.300 H0" fill="none" stroke="#ee7b4e" stroke-width="3.500"/>
</svg>
</body>
</html>
